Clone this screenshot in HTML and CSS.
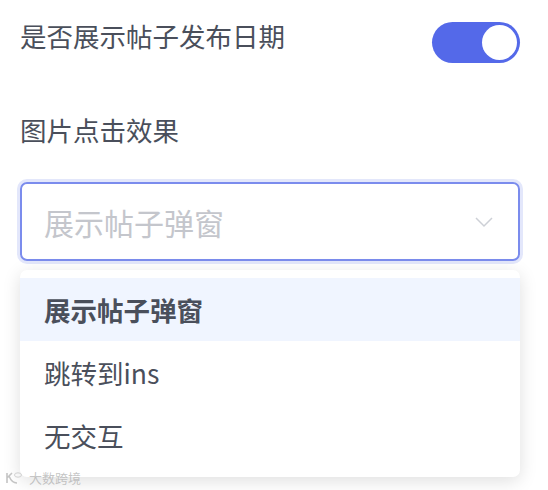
FILE: index.html
```html
<!DOCTYPE html>
<html lang="zh">
<head>
<meta charset="utf-8">
<link rel="stylesheet" href="styles.css">
</head>
<body>
<div class="panel">
  <div class="row">
    <span class="label">是否展示帖子发布日期</span>
    <span class="switch"><span class="knob"></span></span>
  </div>
  <div class="label label-block">图片点击效果</div>
  <div class="select">
    <span class="placeholder">展示帖子弹窗</span>
    <svg class="arrow" width="18" height="12" viewBox="0 0 18 12"><path d="M1 2 L9 10 L17 2" fill="none" stroke="#cdd0d6" stroke-width="1.5"/></svg>
  </div>
  <ul class="menu">
    <li class="item active">展示帖子弹窗</li>
    <li class="item">跳转到ins</li>
    <li class="item">无交互</li>
  </ul>
  <div class="watermark">
    <svg width="18" height="14" viewBox="0 0 18 14"><path d="M2 2 L2 12 M2 7 L7 2 M4 5 C6 10 9 12 12 12" fill="none" stroke="#c4c4c4" stroke-width="1.6"/><ellipse cx="13" cy="4" rx="3.5" ry="2.2" fill="none" stroke="#d0d0d0" stroke-width="1"/></svg>
    <span>大数跨境</span>
  </div>
</div>
</body>
</html>
```
FILE: styles.css
```css
html, body {
  margin: 0;
  padding: 0;
  background: #ffffff;
}
body {
  font-family: "Noto Sans CJK SC", "Noto Sans", sans-serif;
  color: #4a4f5b;
}
.panel {
  position: relative;
  width: 500px;
  height: 490px;
  padding: 17px 28px 0 20px;
  box-sizing: content-box;
}
.row {
  display: flex;
  justify-content: space-between;
  align-items: flex-start;
  height: 94px;
}
.label {
  font-size: 26.5px;
  line-height: 38px;
  color: #4a4f5b;
}
.label-block {
  height: 71px;
}
.switch {
  margin-top: 5px;
  width: 88px;
  height: 41px;
  border-radius: 21px;
  background: #5469e9;
  display: flex;
  align-items: center;
  justify-content: flex-end;
  padding-right: 3px;
  box-sizing: border-box;
}
.knob {
  width: 35px;
  height: 35px;
  border-radius: 50%;
  background: #ffffff;
}
.select {
  box-sizing: border-box;
  width: 500px;
  height: 79px;
  border: 2px solid #7b8ced;
  border-radius: 7px;
  box-shadow: 0 0 0 3px #e3e7fb;
  display: flex;
  align-items: center;
  justify-content: space-between;
  padding: 0 25px 0 22px;
}
.placeholder {
  font-size: 30px;
  color: #c4c6cc;
}
.menu {
  list-style: none;
  margin: 9px 0 0 0;
  padding: 8px 0 10px;
  width: 500px;
  background: #ffffff;
  border-radius: 7px;
  box-shadow: 0 4px 18px rgba(0, 0, 0, 0.13);
}
.item {
  height: 63px;
  line-height: 64px;
  padding: 0 24px;
  font-size: 26.5px;
  color: #4a4f5b;
}
.item.active {
  background: #f0f5ff;
  font-weight: bold;
}
.watermark {
  position: absolute;
  left: 5px;
  top: 470px;
  display: flex;
  align-items: center;
  gap: 6px;
  font-size: 13px;
  line-height: 16px;
  color: rgba(160, 160, 160, 0.6);
}
```
